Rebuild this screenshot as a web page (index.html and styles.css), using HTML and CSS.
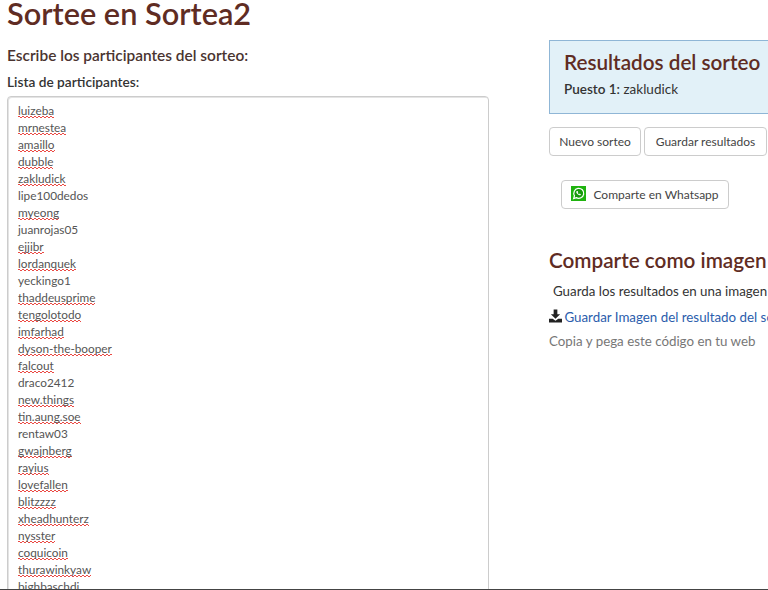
FILE: index.html
```html
<!DOCTYPE html>
<html lang="es">
<head>
<meta charset="utf-8">
<title>Sortee en Sortea2</title>
<link rel="stylesheet" href="styles.css">
</head>
<body>
<div class="page">
  <h1 class="title">Sortee en Sortea2</h1>
  <div class="columns">
    <section class="left">
      <h2 class="subtitle">Escribe los participantes del sorteo:</h2>
      <div class="label">Lista de participantes:</div>
      <div class="textarea">
        <div><span class="sp">luizeba</span></div>
        <div><span class="sp">mrnestea</span></div>
        <div><span class="sp">amaillo</span></div>
        <div><span class="sp">dubble</span></div>
        <div><span class="sp">zakludick</span></div>
        <div>lipe100dedos</div>
        <div><span class="sp">myeong</span></div>
        <div>juanrojas05</div>
        <div><span class="sp">ejjibr</span></div>
        <div><span class="sp">lordanquek</span></div>
        <div>yeckingo1</div>
        <div><span class="sp">thaddeusprime</span></div>
        <div><span class="sp">tengolotodo</span></div>
        <div><span class="sp">imfarhad</span></div>
        <div><span class="sp">dyson-the-booper</span></div>
        <div><span class="sp">falcout</span></div>
        <div>draco2412</div>
        <div><span class="sp">new.things</span></div>
        <div><span class="sp">tin.aung.soe</span></div>
        <div>rentaw03</div>
        <div><span class="sp">gwajnberg</span></div>
        <div><span class="sp">rayius</span></div>
        <div><span class="sp">lovefallen</span></div>
        <div><span class="sp">blitzzzz</span></div>
        <div><span class="sp">xheadhunterz</span></div>
        <div><span class="sp">nysster</span></div>
        <div><span class="sp">coquicoin</span></div>
        <div><span class="sp">thurawinkyaw</span></div>
        <div><span class="sp">bighbaschdi</span></div>
      </div>
    </section>
    <section class="right">
      <div class="result">
        <h2 class="result-title">Resultados del sorteo</h2>
        <p class="result-line"><b class="result-rank">Puesto 1:</b> zakludick</p>
      </div>
      <div class="actions">
        <a class="btn btn-new">Nuevo sorteo</a>
        <a class="btn btn-save">Guardar resultados</a>
      </div>
      <a class="btn wa">
        <svg class="wa-icon" viewBox="0 0 16 16" width="15" height="15">
          <rect width="16" height="16" fill="#1fb30f"/>
          <path d="M2.800 13.400l.9-3a5.300 5.300 0 1 1 2 2z" fill="#179a0b" stroke="#fff" stroke-width="1.300"/>
          <path d="M6.200 5.200c-.8.6-.7 1.700.2 2.900 1 1.300 2.200 2 3.200 1.800.6-.1 1-.7.9-1.100L9.300 8.100l-.6.6c-.6-.2-1.200-.8-1.500-1.500l.5-.6-.6-1.300z" fill="#fff"/>
        </svg>
        <span>Comparte en Whatsapp</span>
      </a>
      <h2 class="share-title">Comparte como imagen</h2>
      <p class="share-text">Guarda los resultados en una imagen para compartir</p>
      <p class="share-link">
        <svg class="dl-icon" viewBox="0 0 14 14" width="13" height="14">
          <path d="M5 0h4v5h3L7 10 2 5h3z" fill="#222"/>
          <path d="M0 10h4l3 2 3-2h4v4H0z" fill="#222"/>
        </svg>
        <a class="link">Guardar Imagen del resultado del sorteo</a>
      </p>
      <p class="share-muted">Copia y pega este código en tu web</p>
    </section>
  </div>
</div>
<div class="edge"></div>
</body>
</html>
```
FILE: styles.css
```css
html, body {
  margin: 0;
  height: 100%;
  overflow: hidden;
  background: #fff;
}
body {
  font-family: Lato, sans-serif;
  font-size: 13px;
  color: #333;
  width: 768px;
  height: 590px;
  position: relative;
}
.page {
  padding-left: 7px;
}
.title {
  margin: 0;
  font-size: 30.700px;
  line-height: 28px;
  font-weight: 600;
  color: #5f2c23;
}
.columns {
  display: flex;
  margin-top: 12px;
}
.left {
  width: 482px;
  flex: none;
}
.right {
  margin-left: 60px;
  width: 400px;
  flex: none;
}
.subtitle {
  margin: 5px 0 0;
  font-size: 15.450px;
  line-height: 20px;
  font-weight: 600;
  color: #4a3430;
}
.label {
  margin-top: 8px;
  font-size: 13.700px;
  line-height: 18px;
  font-weight: 600;
  color: #333;
}
.textarea {
  margin-top: 5px;
  height: 600px;
  box-sizing: border-box;
  border: 1px solid #ccc;
  border-radius: 4px;
  padding: 5px 10px;
  font-size: 11.800px;
  line-height: 17px;
  color: #555;
  box-shadow: inset 1px 1px 0 #e4e4e4;
}
.sp {
  background-image:
    linear-gradient(45deg, transparent 35%, #ea4a44 35%, #ea4a44 65%, transparent 65%),
    linear-gradient(-45deg, transparent 35%, #ea4a44 35%, #ea4a44 65%, transparent 65%);
  background-size: 4px 2px;
  background-position: 0 100%, 2px 100%;
  background-repeat: repeat-x;
}
.result {
  box-sizing: border-box;
  width: 400px;
  height: 74px;
  background: #e2f1f8;
  border: 1px solid #8fb6d6;
  padding: 8px 14px;
}
.result-title {
  margin: 0;
  font-size: 20.700px;
  line-height: 26px;
  font-weight: 600;
  color: #5f2c23;
}
.result-line {
  margin: 5px 0 0;
  font-size: 13.500px;
  line-height: 18px;
}
.result-rank {
  font-weight: 600;
}
.actions {
  display: flex;
  gap: 3px;
  margin-top: 13px;
}
.btn {
  display: inline-flex;
  align-items: center;
  justify-content: center;
  box-sizing: border-box;
  height: 29px;
  background: #fff;
  border: 1px solid #ccc;
  border-radius: 4px;
  font-size: 12px;
  color: #444;
  white-space: nowrap;
}
.btn-new {
  width: 92px;
}
.btn-save {
  width: 123px;
}
.wa {
  margin: 24px 0 0 12px;
  gap: 7px;
  width: 168px;
}
.wa-icon {
  margin-top: -3px;
}
.share-title {
  margin: 38px 0 0;
  font-size: 20.700px;
  line-height: 26px;
  font-weight: 600;
  color: #5f2c23;
  white-space: nowrap;
}
.share-text {
  margin: 9px 0 0 4px;
  font-size: 13.330px;
  line-height: 18px;
  white-space: nowrap;
}
.share-link {
  margin: 8px 0 0;
  font-size: 13.330px;
  line-height: 18px;
  white-space: nowrap;
}
.link {
  margin-left: -1px;
  color: #2b5dac;
}
.dl-icon {
  vertical-align: -1px;
}
.share-muted {
  margin: 6px 0 0;
  font-size: 13.330px;
  line-height: 18px;
  color: #777;
}
.edge {
  position: absolute;
  left: 0;
  bottom: 0;
  width: 768px;
  height: 1px;
  background: #444;
}
```
